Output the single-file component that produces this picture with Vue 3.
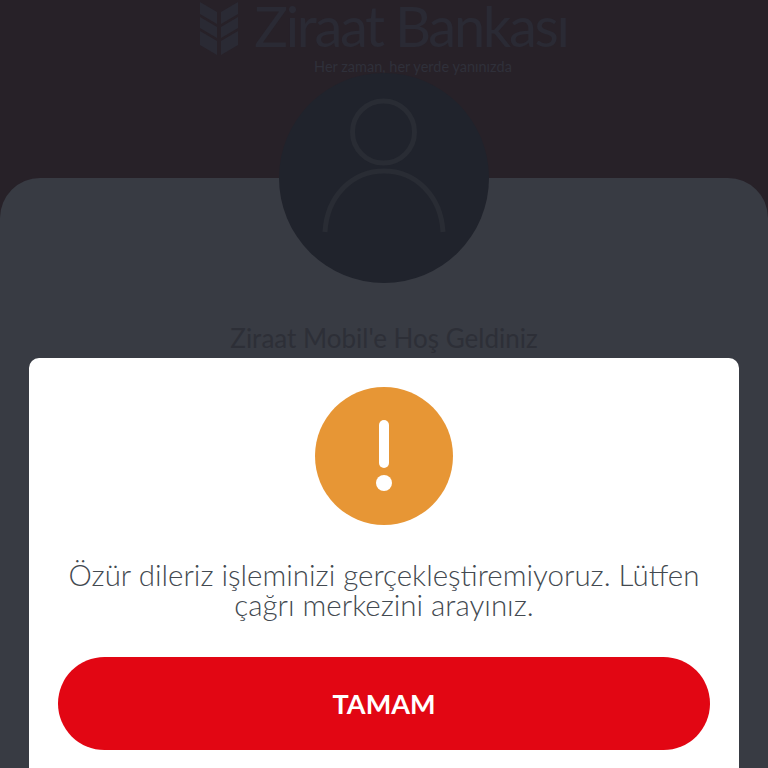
<template>
    <div class="page">
        <!-- logo -->
        <header class="brand">
            <div class="brand-row">
                <svg class="sheaf" viewBox="0 0 38 56" width="38" height="56">
                    <path d="M17 0v12L0 2v12l17 10v-6M21 0v12L38 2v12L21 24v-6" fill="#2a2a34" />
                    <path d="M0 17l17 10v11L0 28zM38 17L21 27v11l17-10zM0 31l17 10v14L0 45zM38 31L21 41v14l17-10z" fill="#2a2a34" />
                </svg>
                <span class="brand-name">Ziraat Bankası</span>
            </div>
            <div class="tagline">Her zaman, her yerde yanınızda</div>
        </header>

        <!-- giriş kartı -->
        <main class="card">
            <div class="avatar">
                <svg viewBox="0 0 210 210" width="210" height="210">
                    <circle cx="104.5" cy="59" r="31" fill="none" stroke="#292c34" stroke-width="5" />
                    <path d="M46 159c2-36 27-61 59-61s57 25 59 61" fill="none" stroke="#292c34" stroke-width="5" />
                </svg>
            </div>
            <h1 class="welcome">Ziraat Mobil'e Hoş Geldiniz</h1>
        </main>

        <!-- uyarı penceresi -->
        <section class="dialog">
            <div class="alert-icon">
                <span class="alert-bar"></span>
                <span class="alert-dot"></span>
            </div>
            <p class="message">Özür dileriz işleminizi gerçekleştiremiyoruz. Lütfen çağrı merkezini arayınız.</p>
            <button type="button" class="ok-button">TAMAM</button>
        </section>
    </div>
</template>

<script setup>
</script>

<style>
html,
body {
    margin: 0;
    background: #272128;
}
</style>

<style scoped>
.page {
    position: relative;
    display: flex;
    flex-direction: column;
    width: 768px;
    height: 768px;
    overflow: hidden;
    background: #272128;
    font-family: Lato, "Noto Sans", sans-serif;
}

.brand {
    display: flex;
    flex-direction: column;
    align-items: center;
    flex: none;
    height: 178px;
}

.brand-row {
    display: flex;
    align-items: flex-start;
    justify-content: center;
    gap: 16px;
    height: 56px;
}

.sheaf {
    flex: none;
}

.brand-name {
    padding-top: 1px;
    font-size: 56px;
    line-height: 50px;
    font-weight: 400;
    letter-spacing: -2.3px;
    color: #2a2a34;
    white-space: nowrap;
}

.tagline {
    margin-top: 2px;
    padding-left: 58px;
    font-size: 14.5px;
    line-height: 18px;
    color: #2f303a;
}

.card {
    display: flex;
    flex-direction: column;
    align-items: center;
    flex: 1;
    background: #383b43;
    border-radius: 40px 40px 0 0;
}

.avatar {
    flex: none;
    width: 210px;
    height: 210px;
    margin-top: -105px;
    border-radius: 50%;
    background: #20232c;
}

.welcome {
    margin: 39px 0 0;
    font-size: 26px;
    line-height: 32px;
    font-weight: 400;
    color: #2d2f37;
}

.dialog {
    position: absolute;
    left: 29px;
    right: 29px;
    top: 358px;
    bottom: 0;
    display: flex;
    flex-direction: column;
    align-items: center;
    box-sizing: border-box;
    padding: 29px 29px 0;
    background: #fff;
    border-radius: 10px 10px 0 0;
}

.alert-icon {
    display: flex;
    flex-direction: column;
    align-items: center;
    flex: none;
    box-sizing: border-box;
    width: 138px;
    height: 138px;
    padding-top: 33px;
    border-radius: 50%;
    background: #e79635;
}

.alert-bar {
    flex: none;
    width: 10px;
    height: 48px;
    border-radius: 5px;
    background: #fff;
}

.alert-dot {
    flex: none;
    width: 16px;
    height: 16px;
    margin-top: 7px;
    border-radius: 50%;
    background: #fff;
}

.message {
    margin: 35px 0 0;
    font-size: 29.5px;
    line-height: 30px;
    font-weight: 300;
    color: #434950;
    text-align: center;
}

.ok-button {
    flex: none;
    width: 652px;
    height: 93px;
    margin-top: 37px;
    border: none;
    border-radius: 47px;
    background: #e20613;
    color: #fff;
    font-family: inherit;
    font-size: 27px;
    font-weight: 700;
}
</style>
